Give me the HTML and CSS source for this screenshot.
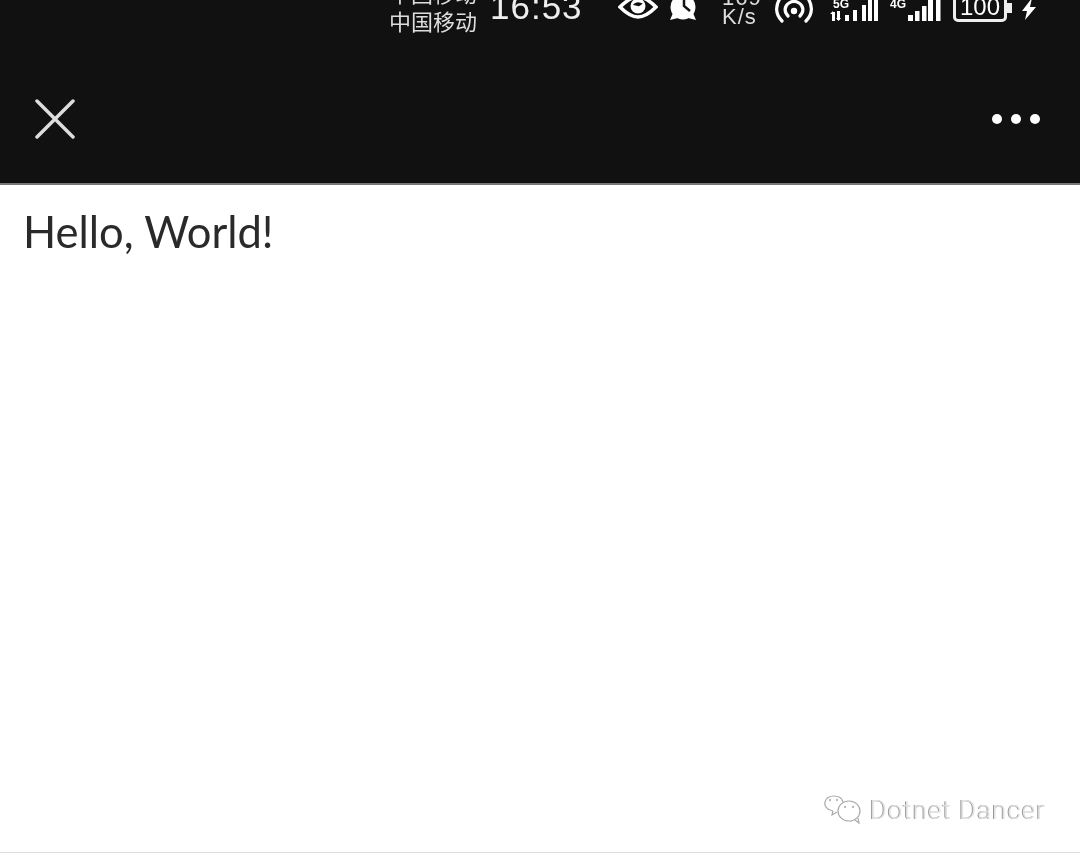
FILE: index.html
```html
<!DOCTYPE html>
<html lang="zh-CN">

<head>
    <meta charset="UTF-8">
    <title>Hello, World!</title>
    <link rel="stylesheet" href="styles.css">
</head>

<body>

    <div class="header">
        <div class="status-bar">
            <div class="carrier">
                <div>中国移动</div>
                <div>中国移动</div>
            </div>
            <div class="time">16:53</div>

            <svg class="eye" width="40" height="24" viewBox="0 0 40 24">
                <path d="M2 7C9 0 14-3 20-3s11 3 18 10c-7 7-12 10-18 10S9 14 2 7z" fill="none" stroke="white" stroke-width="3.5" />
                <circle cx="20" cy="6" r="7.5" fill="white" />
                <path d="M15 5c3-4 7-3 10-1-2 0-3 3-5 2-2 0-3-1-5-1z" fill="#111" />
            </svg>

            <svg class="alarm" width="32" height="24" viewBox="0 0 32 24">
                <circle cx="15" cy="7" r="12.500" fill="white" />
                <path d="M2 20 5 13 10 18ZM28 20 25 13 20 18Z" fill="white" />
                <path d="M16 -2v8l6 5" fill="none" stroke="#111" stroke-width="2.500" />
            </svg>

            <div class="speed">
                <div>169</div>
                <div>K/s</div>
            </div>

            <svg class="hotspot" width="38" height="24" viewBox="0 0 38 24">
                <path d="M7 21C0 14 0 5 6-3M31 21c7-7 7-16 1-24" fill="none" stroke="white" stroke-width="3.200" stroke-linecap="round" />
                <path d="M13 16c-4-4-4-10 1-13 3-2 7-2 10 0 5 3 5 9 1 13" fill="none" stroke="white" stroke-width="3.200" stroke-linecap="round" />
                <circle cx="19" cy="11" r="3.200" fill="white" />
            </svg>

            <svg class="signal-a" width="52" height="24" viewBox="0 0 52 24">
                <text x="5" y="8" class="net-label">5G</text>
                <g fill="white">
                    <path d="M4 12 7 12 7 21 4 21ZM9 11 12 11 12 20 9 20ZM2 14 5 11 5 14ZM8 18 13 18 10.500 21Z" />
                    <rect x="17" y="15" width="4" height="6" />
                    <rect x="25" y="10" width="4" height="11" />
                    <rect x="34" y="5" width="4" height="16" />
                    <rect x="40" y="0" width="4" height="21" />
                    <rect x="46" y="0" width="4" height="21" />
                </g>
            </svg>

            <svg class="signal-b" width="54" height="24" viewBox="0 0 54 24">
                <text x="2" y="8" class="net-label">4G</text>
                <g fill="white">
                    <rect x="20" y="15" width="5" height="6" />
                    <rect x="27" y="11" width="4.500" height="10" />
                    <rect x="34" y="6" width="4.500" height="15" />
                    <rect x="40" y="0" width="5" height="21" />
                    <rect x="48" y="0" width="4.500" height="21" />
                </g>
            </svg>

            <div class="battery">
                <div class="battery-body">100</div>
                <div class="battery-cap"></div>
            </div>

            <svg class="bolt" width="14" height="24" viewBox="0 0 14 24">
                <path d="M10-2 0 11h5L3 20 14 7H8z" fill="white" />
            </svg>
        </div>

        <div class="nav-bar">
            <svg class="close-icon" width="40" height="40" viewBox="0 0 40 40">
                <path d="M2 2 38 38M38 2 2 38" stroke="#ddd" stroke-width="3.500" stroke-linecap="round" />
            </svg>
            <div class="more">
                <div class="more-dot"></div>
                <div class="more-dot"></div>
                <div class="more-dot"></div>
            </div>
        </div>
    </div>

    <div class="content">
        <div class="hello">Hello, World!</div>

        <div class="watermark">
            <svg class="wechat" width="38" height="30" viewBox="0 0 38 30">
                <g fill="none" stroke="#aaa" stroke-width="1.200">
                    <path d="M9 16C3 15 0 11 1 7c1-4 5-6 9-6s8 2 9 6" />
                    <path d="M9 16l-1 4 5-3" />
                    <ellipse cx="25" cy="16" rx="11" ry="10" />
                    <path d="M31 25l4 3-1-5" />
                </g>
                <g fill="#bbb">
                    <circle cx="6" cy="5" r="1.200" />
                    <circle cx="13" cy="5" r="1.200" />
                    <circle cx="21" cy="12" r="1.200" />
                    <circle cx="29" cy="12" r="1.200" />
                </g>
            </svg>
            <div class="watermark-text">Dotnet Dancer</div>
        </div>
    </div>

</body>

</html>
```

FILE: styles.css
```css
html,
body {
    height: 100%;
}

body {
    margin: 0;
    display: flex;
    flex-direction: column;
    background-color: white;
    font-family: "Liberation Sans", Arial, sans-serif;
    overflow: hidden;
}

.header {
    flex: none;
    height: 185px;
    background-color: #111;
    border-bottom: 2px solid #777;
    box-sizing: border-box;
    color: white;
}

.status-bar {
    height: 34px;
    overflow: hidden;
    display: flex;
    align-items: flex-end;
    padding-left: 389px;
    filter: blur(0.6px);
}

.carrier {
    flex: none;
    width: 90px;
    font-family: "Noto Sans CJK SC", sans-serif;
    font-size: 22px;
    line-height: 28px;
    color: #ddd;
}

.time {
    flex: none;
    width: 92px;
    margin-left: 11px;
    margin-bottom: 9px;
    font-size: 35px;
    line-height: 36px;
    color: #eee;
    letter-spacing: 1px;
}

.eye,
.alarm,
.hotspot,
.signal-a,
.signal-b,
.bolt {
    flex: none;
    margin-bottom: 10px;
}

.net-label {
    font-size: 12px;
    font-weight: bold;
    fill: white;
}

.eye {
    margin-left: 36px;
}

.alarm {
    margin-left: 10px;
}

.speed {
    flex: none;
    margin-left: 22px;
    margin-bottom: 8px;
    width: 36px;
    font-size: 22px;
    line-height: 19px;
    letter-spacing: 1px;
    color: #ddd;
}

.hotspot {
    margin-left: 17px;
}

.signal-a {
    margin-left: 15px;
}

.signal-b {
    margin-left: 8px;
}

.battery {
    flex: none;
    display: flex;
    align-items: flex-end;
    margin-left: 11px;
    margin-bottom: 12px;
}

.battery-body {
    width: 54px;
    height: 30px;
    box-sizing: border-box;
    border: 3px solid #eee;
    border-radius: 5px;
    font-size: 24px;
    line-height: 24px;
    text-align: center;
}

.battery-cap {
    width: 5px;
    height: 10px;
    background: #eee;
    margin-bottom: 9px;
}

.bolt {
    margin-left: 10px;
}

.nav-bar {
    height: 40px;
    margin-top: 65px;
    padding: 0 40px 0 35px;
    display: flex;
    align-items: center;
    justify-content: space-between;
    filter: blur(0.5px);
}

.more {
    display: flex;
    gap: 9px;
}

.more-dot {
    width: 10px;
    height: 10px;
    border-radius: 50%;
    background: white;
}

.content {
    flex: 1;
    display: flex;
    flex-direction: column;
    justify-content: space-between;
    border-bottom: 1px solid #ddd;
}

.hello {
    padding: 19px 0 0 23px;
    font-family: Lato, sans-serif;
    font-size: 43.500px;
    line-height: 54px;
    color: #2a2a2a;
    filter: blur(0.4px);
}

.watermark {
    display: flex;
    align-items: center;
    justify-content: flex-end;
    gap: 8px;
    padding: 0 34px 27px 0;
    filter: blur(0.3px);
}

.watermark-text {
    font-family: Roboto, sans-serif;
    font-weight: 300;
    font-size: 26px;
    line-height: 30px;
    letter-spacing: 1px;
    color: #e2e2e2;
    text-shadow: -1px 0 0 #999;
}
```
